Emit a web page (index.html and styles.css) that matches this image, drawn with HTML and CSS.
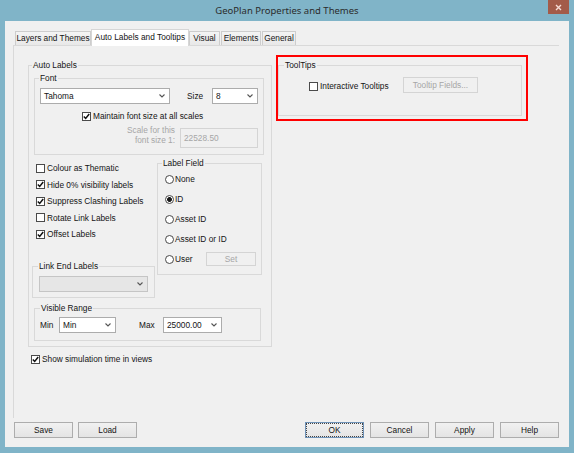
FILE: index.html
```html
<!DOCTYPE html>
<html>
<head>
<meta charset="utf-8">
<title>GeoPlan Properties and Themes</title>
<link rel="stylesheet" href="styles.css">
</head>
<body>
<div class="window">
  <div class="titlebar">
    <div class="title">GeoPlan Properties and Themes</div>
    <div class="close">
      <svg width="7" height="7" viewBox="0 0 7 7"><path d="M1 1 L6 6 M6 1 L1 6" stroke="#f6dcd6" stroke-width="1.4" fill="none"/></svg>
    </div>
  </div>
  <div class="client">
    <div class="tabs">
      <div class="tab t1">Layers and Themes</div>
      <div class="tab active t2">Auto Labels and Tooltips</div>
      <div class="tab t3">Visual</div>
      <div class="tab t4">Elements</div>
      <div class="tab t5">General</div>
    </div>
    <div class="panel">
      <div class="col-left">
        <div class="group g-auto">
          <div class="gtitle">Auto Labels</div>
          <div class="group g-font">
            <div class="gtitle">Font</div>
            <div class="font-row">
              <div class="combo c-font"><span>Tahoma</span><svg class="arrow" width="6" height="4" viewBox="0 0 6 4"><path d="M0.5 0.5 L3 3 L5.5 0.5" stroke="#555" stroke-width="1.1" fill="none"/></svg></div>
              <span class="size-label">Size</span>
              <div class="combo c-size"><span>8</span><svg class="arrow" width="6" height="4" viewBox="0 0 6 4"><path d="M0.5 0.5 L3 3 L5.5 0.5" stroke="#555" stroke-width="1.1" fill="none"/></svg></div>
            </div>
            <div class="check maintain"><span class="box"><svg width="7" height="7" viewBox="0 0 7 7"><path d="M0.8 3.4 L2.7 5.4 L6.2 1" stroke="#111" stroke-width="1.5" fill="none"/></svg></span>Maintain font size at all scales</div>
            <div class="scale-row">
              <div class="scale-label">Scale for this<br>font size 1:</div>
              <div class="input">22528.50</div>
            </div>
          </div>
          <div class="mid">
            <div class="mid-left">
              <div class="checks">
                <div class="check row"><span class="box"></span>Colour as Thematic</div>
                <div class="check row"><span class="box"><svg width="7" height="7" viewBox="0 0 7 7"><path d="M0.8 3.4 L2.7 5.4 L6.2 1" stroke="#111" stroke-width="1.5" fill="none"/></svg></span>Hide 0% visibility labels</div>
                <div class="check row"><span class="box"><svg width="7" height="7" viewBox="0 0 7 7"><path d="M0.8 3.4 L2.7 5.4 L6.2 1" stroke="#111" stroke-width="1.5" fill="none"/></svg></span>Suppress Clashing Labels</div>
                <div class="check row"><span class="box"></span>Rotate Link Labels</div>
                <div class="check row"><span class="box"><svg width="7" height="7" viewBox="0 0 7 7"><path d="M0.8 3.4 L2.7 5.4 L6.2 1" stroke="#111" stroke-width="1.5" fill="none"/></svg></span>Offset Labels</div>
              </div>
              <div class="group g-link">
                <div class="gtitle">Link End Labels</div>
                <div class="combo disabled c-link"><span></span><svg class="arrow" width="6" height="4" viewBox="0 0 6 4"><path d="M0.5 0.5 L3 3 L5.5 0.5" stroke="#555" stroke-width="1.1" fill="none"/></svg></div>
              </div>
            </div>
            <div class="group g-field">
              <div class="gtitle">Label Field</div>
              <div class="radio-row"><span class="radio"></span>None</div>
              <div class="radio-row"><span class="radio on"></span>ID</div>
              <div class="radio-row"><span class="radio"></span>Asset ID</div>
              <div class="radio-row"><span class="radio"></span>Asset ID or ID</div>
              <div class="radio-row"><span class="radio"></span><span class="user-label">User</span><span class="btn small disabled">Set</span></div>
            </div>
          </div>
          <div class="group g-range">
            <div class="gtitle">Visible Range</div>
            <div class="range-row">
              <span class="min-label">Min</span>
              <div class="combo c-min"><span>Min</span><svg class="arrow" width="6" height="4" viewBox="0 0 6 4"><path d="M0.5 0.5 L3 3 L5.5 0.5" stroke="#555" stroke-width="1.1" fill="none"/></svg></div>
              <span class="max-label">Max</span>
              <div class="combo c-max"><span>25000.00</span><svg class="arrow" width="6" height="4" viewBox="0 0 6 4"><path d="M0.5 0.5 L3 3 L5.5 0.5" stroke="#555" stroke-width="1.1" fill="none"/></svg></div>
            </div>
          </div>
        </div>
        <div class="check showsim"><span class="box"><svg width="7" height="7" viewBox="0 0 7 7"><path d="M0.8 3.4 L2.7 5.4 L6.2 1" stroke="#111" stroke-width="1.5" fill="none"/></svg></span>Show simulation time in views</div>
      </div>
      <div class="col-right">
        <div class="highlight">
          <div class="group g-tips">
            <div class="gtitle">ToolTips</div>
            <div class="tips-row">
              <div class="check tips-check"><span class="box"></span>Interactive Tooltips</div>
              <span class="btn tips-btn disabled">Tooltip Fields...</span>
            </div>
          </div>
        </div>
      </div>
    </div>
    <div class="buttons">
      <div class="btn-group left">
        <span class="btn">Save</span>
        <span class="btn">Load</span>
      </div>
      <div class="btn-group right">
        <span class="btn default">OK</span>
        <span class="btn">Cancel</span>
        <span class="btn">Apply</span>
        <span class="btn">Help</span>
      </div>
    </div>
  </div>
</div>
</body>
</html>
```

FILE: styles.css
```css
* { box-sizing: border-box; }
html, body { margin: 0; padding: 0; }
body {
  width: 574px;
  height: 453px;
  overflow: hidden;
  background: #80b4c8;
  font-family: "Liberation Sans", Arial, sans-serif;
  font-size: 8.3px;
  color: #141414;
}
.window { width: 574px; height: 453px; background: #80b4c8; }

.titlebar {
  height: 21px;
  display: grid;
  grid-template-columns: 26px 1fr 26px;
  align-items: start;
}
.title {
  grid-column: 2;
  text-align: center;
  font-family: "Noto Sans", sans-serif;
  font-size: 9.5px;
  line-height: 21px;
  color: #2b2b2b;
}
.close {
  grid-column: 3;
  width: 21px;
  height: 14px;
  background: #a35b49;
  display: flex;
  align-items: center;
  justify-content: center;
}

.client {
  margin: 0 5px;
  height: 426px;
  background: #f0f0f0;
  padding-top: 8px;
}

.tabs {
  display: flex;
  align-items: flex-end;
  height: 16px;
  padding-left: 10px;
}
.tab {
  height: 14px;
  border: 1px solid #cdcdcd;
  border-bottom: none;
  background: linear-gradient(#f4f4f4, #e8e8e8);
  text-align: center;
  line-height: 13px;
  white-space: nowrap;
}
.tab.active {
  height: 17px;
  margin-bottom: -1px;
  background: #fff;
  border-color: #d6d6d6;
  line-height: 14px;
}
.t1 { width: 76px; }
.t2 { width: 98px; }
.t3 { width: 31px; }
.t4 { width: 40px; margin-left: 1px; }
.t5 { width: 34px; margin-left: 1px; }

.panel {
  margin-left: 8px;
  width: 546px;
  height: 373px;
  border-top: 1px solid #d9d9d9;
  border-left: 1px solid #d9d9d9;
  display: flex;
  align-items: flex-start;
  padding-left: 14px;
}

.group { border: 1px solid #d9d9d9; }
.gtitle {
  margin: -7px 0 0 4px;
  padding: 0 1px;
  background: #f0f0f0;
  line-height: 12px;
  height: 12px;
  width: max-content;
}

.col-left { margin-top: 19px; width: 244px; }
.g-auto { width: 244px; height: 282px; }
.g-auto > .gtitle { margin-left: 3px; }

.g-font { margin: 7px 0 0 5px; width: 230px; height: 77px; }
.font-row { display: flex; align-items: center; height: 16px; margin: 4px 0 0 5px; }

.combo {
  height: 16px;
  border: 1px solid #acacac;
  background: #fff;
  display: flex;
  align-items: center;
  justify-content: space-between;
  padding: 0 4px 0 3px;
  white-space: nowrap;
}
.combo.disabled { background: #e6e6e6; border-color: #c5c5c5; }
.arrow { flex: none; }
.c-font { width: 130px; }
.size-label { width: 25px; margin-left: 17px; }
.c-size { width: 46px; }

.check { display: flex; align-items: center; height: 14px; white-space: nowrap; }
.box {
  flex: none;
  width: 9px;
  height: 9px;
  border: 1px solid #4a4a4a;
  background: #fff;
  margin-right: 2px;
  display: flex;
  align-items: center;
  justify-content: center;
}
.maintain { margin: 5px 0 0 47px; }

.scale-row { display: flex; align-items: flex-start; margin: 5px 0 0 40px; }
.scale-label {
  width: 100px;
  text-align: right;
  line-height: 10px;
  margin-top: -3px;
  color: #a6a6a6;
}
.input {
  width: 78px;
  height: 20px;
  margin-left: 5px;
  border: 1px solid #d4d4d4;
  background: #f0f0f0;
  color: #a6a6a6;
  line-height: 18px;
  padding-left: 3px;
}

.mid { display: flex; align-items: flex-start; margin-left: 3px; }
.mid-left { width: 123px; }
.checks { padding: 5px 0 0 4px; }
.checks .row { height: 16.5px; }

.g-link { width: 123px; height: 32px; margin-top: 23.5px; }
.g-link > .gtitle { margin-left: 5px; }
.c-link { width: 109px; margin: 4px 0 0 6px; }

.g-field { width: 105px; height: 112px; margin: 8px 0 0 2px; }
.radio-row { display: flex; align-items: center; height: 20px; padding-left: 7px; white-space: nowrap; }
.radio-row:first-of-type { margin-top: 1px; }
.radio {
  flex: none;
  width: 9px;
  height: 9px;
  border: 1px solid #4a4a4a;
  border-radius: 50%;
  background: #fff;
  margin-right: 1px;
}
.radio.on { background: radial-gradient(circle, #1a1a1a 0 2.1px, #fff 2.7px); }
.user-label { width: 31px; }

.btn {
  width: 59px;
  height: 16px;
  border: 1px solid #adadad;
  background: linear-gradient(#f1f1f1, #e4e4e4);
  display: flex;
  align-items: center;
  justify-content: center;
  white-space: nowrap;
}
.btn.disabled { color: #a6a6a6; border-color: #d4d4d4; background: #f0f0f0; }
.btn.small { width: 50px; height: 14px; }
.btn.default { border-color: #6f93b8; outline: 1px dotted #444; outline-offset: -2px; }

.g-range { width: 227px; height: 33px; margin: 10px 0 0 5px; }
.g-range > .gtitle { margin-left: 5px; }
.range-row { display: flex; align-items: center; margin: 3px 0 0 5px; height: 16px; }
.min-label { width: 19px; }
.c-min { width: 57px; }
.max-label { width: 24px; margin-left: 23px; }
.c-max { width: 59px; }

.showsim { margin: 5px 0 0 3px; }

.col-right { margin: 9px 0 0 4px; }
.highlight { border: 2px solid #ff0000; padding: 8px 4px 3px 0; }
.g-tips { width: 244px; height: 51px; }
.g-tips > .gtitle { margin-left: 5px; }
.tips-row { display: flex; align-items: flex-start; margin: 6px 0 0 30px; }
.tips-check { width: 94px; margin-top: 2px; }
.tips-btn { width: 75px; height: 16px; }

.buttons {
  display: flex;
  justify-content: space-between;
  margin-top: 4px;
  padding: 0 10px 0 9px;
}
.btn-group { display: flex; }
.btn-group.left { gap: 5px; }
.btn-group.right { gap: 6px; }
```
